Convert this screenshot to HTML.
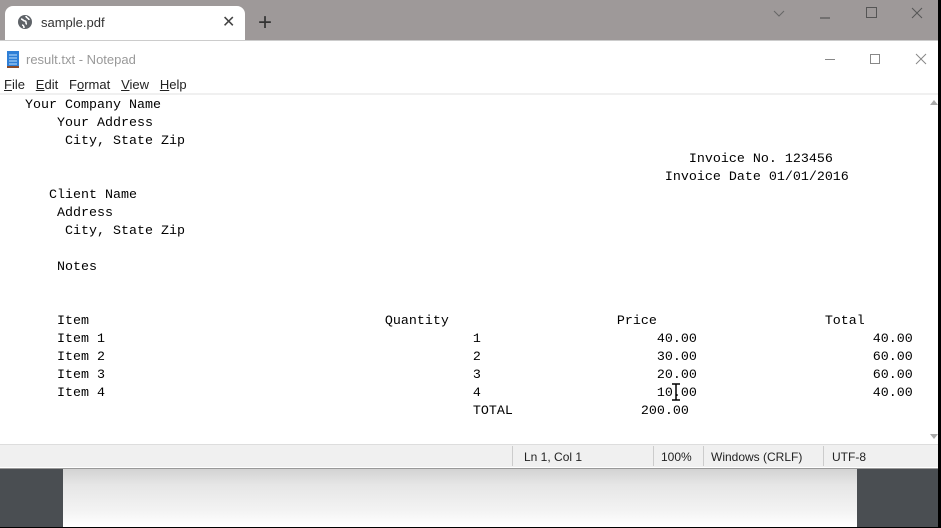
<!DOCTYPE html>
<html><head><style>
body{margin:0;width:941px;height:528px;position:relative;overflow:hidden;background:#9e9999;font-family:"Liberation Sans",sans-serif}
.a{position:absolute}
.t{position:absolute;font-family:"Liberation Mono",monospace;font-size:13.33px;line-height:18px;color:#000;white-space:pre}
</style></head><body>
<div class="a" style="left:5px;top:6px;width:240px;height:36px;background:#fff;border-radius:8px 8px 0 0"></div>
<svg class="a" style="left:17px;top:14px" width="16" height="16" viewBox="0 0 16 16"><circle cx="8" cy="8" r="7" fill="#5f6368"/><path d="M4 5c2 0 2 2 4 2s0 3 2 3M9 2c0 2 3 2 3 4M5 11c1 0 2 1 2 3" stroke="#fff" stroke-width="1.6" fill="none"/></svg>
<div class="a" style="left:41px;top:15px;font-size:13px;color:#333">sample.pdf</div>
<div class="a" style="left:222px;top:12px;font-size:16px;color:#444">✕</div>
<div class="a" style="left:258px;top:9px;font-size:24px;color:#333">+</div>
<svg class="a" style="left:770px;top:6px" width="160" height="16"><path d="M4 5l5 5 5-5" stroke="#666" fill="none"/><path d="M50 12h10" stroke="#555" stroke-width="1.2"/><rect x="96.5" y="1.5" width="10" height="10" stroke="#555" fill="none"/><path d="M142 2l10 10M152 2l-10 10" stroke="#555"/></svg>
<div class="a" style="left:938px;top:0;width:3px;height:528px;background:#000"></div>
<div class="a" style="left:0;top:467px;width:938px;height:61px;background:#4a4e52"></div>
<div class="a" style="left:63px;top:467px;width:794px;height:60px;background:linear-gradient(#d0d0d0,#e6e6e6 30%,#f2f2f2 70%,#fff)"></div>
<div class="a" style="left:0;top:527px;width:941px;height:1px;background:#000"></div>
<div class="a" style="left:0;top:40px;width:938px;height:427px;background:#fff;border-top:1px solid #ccc;border-bottom:1px solid #999"></div>
<svg class="a" style="left:6px;top:50px" width="14" height="18"><rect x="1" y="1" width="12" height="16" fill="#2f7fd6"/><path d="M3 5h8M3 8h8M3 11h8M3 14h8" stroke="#bfe0ff"/><rect x="1" y="16" width="12" height="2" fill="#8a4a2a"/></svg>
<div class="a" style="left:26px;top:52px;font-size:13px;color:#999">result.txt - Notepad</div>
<svg class="a" style="left:820px;top:50px" width="115" height="16"><path d="M5 9.5h10" stroke="#888"/><rect x="50.5" y="4.5" width="9" height="9" stroke="#888" fill="none"/><path d="M96 4l10 10M106 4l-10 10" stroke="#888"/></svg>
<div class="a" style="left:4px;top:77px;font-size:13px;color:#222"><u>F</u>ile&nbsp;&nbsp;&nbsp;<u>E</u>dit&nbsp;&nbsp;&nbsp;F<u>o</u>rmat&nbsp;&nbsp;&nbsp;<u>V</u>iew&nbsp;&nbsp;&nbsp;<u>H</u>elp</div>
<div class="a" style="left:0;top:93px;width:938px;height:2px;background:#f0f0f0"></div>
<div class="a" style="left:928px;top:95px;width:10px;height:349px;background:#fff"></div>
<div class="a" style="left:930px;top:100px;width:0;height:0;border-left:4px solid transparent;border-right:4px solid transparent;border-bottom:5px solid #aaa"></div>
<div class="a" style="left:930px;top:434px;width:0;height:0;border-left:4px solid transparent;border-right:4px solid transparent;border-top:5px solid #aaa"></div>
<div class="t" style="left:1px;top:97px">   Your Company Name
       Your Address
        City, State Zip
                                                                                      Invoice No. 123456
                                                                                   Invoice Date 01/01/2016
      Client Name
       Address
        City, State Zip

       Notes


       Item                                     Quantity                     Price                     Total
       Item 1                                              1                      40.00                      40.00
       Item 2                                              2                      30.00                      60.00
       Item 3                                              3                      20.00                      60.00
       Item 4                                              4                      10.00                      40.00
                                                           TOTAL                200.00</div>
<svg class="a" style="left:671px;top:383px" width="10" height="18"><path d="M1 1h8M5 1v16M1 17h8" stroke="#000" stroke-width="1.5"/></svg>
<div class="a" style="left:0;top:444px;width:938px;height:22px;background:#f0f0f0;border-top:1px solid #ddd"></div>
<div class="a" style="left:512px;top:446px;width:1px;height:20px;background:#ccc"></div>
<div class="a" style="left:653px;top:446px;width:1px;height:20px;background:#ccc"></div>
<div class="a" style="left:703px;top:446px;width:1px;height:20px;background:#ccc"></div>
<div class="a" style="left:823px;top:446px;width:1px;height:20px;background:#ccc"></div>
<div class="a" style="left:524px;top:450px;font-size:12px;color:#222">Ln 1, Col 1</div>
<div class="a" style="left:661px;top:450px;font-size:12px;color:#222">100%</div>
<div class="a" style="left:711px;top:450px;font-size:12px;color:#222">Windows (CRLF)</div>
<div class="a" style="left:832px;top:450px;font-size:12px;color:#222">UTF-8</div>
</body></html>
